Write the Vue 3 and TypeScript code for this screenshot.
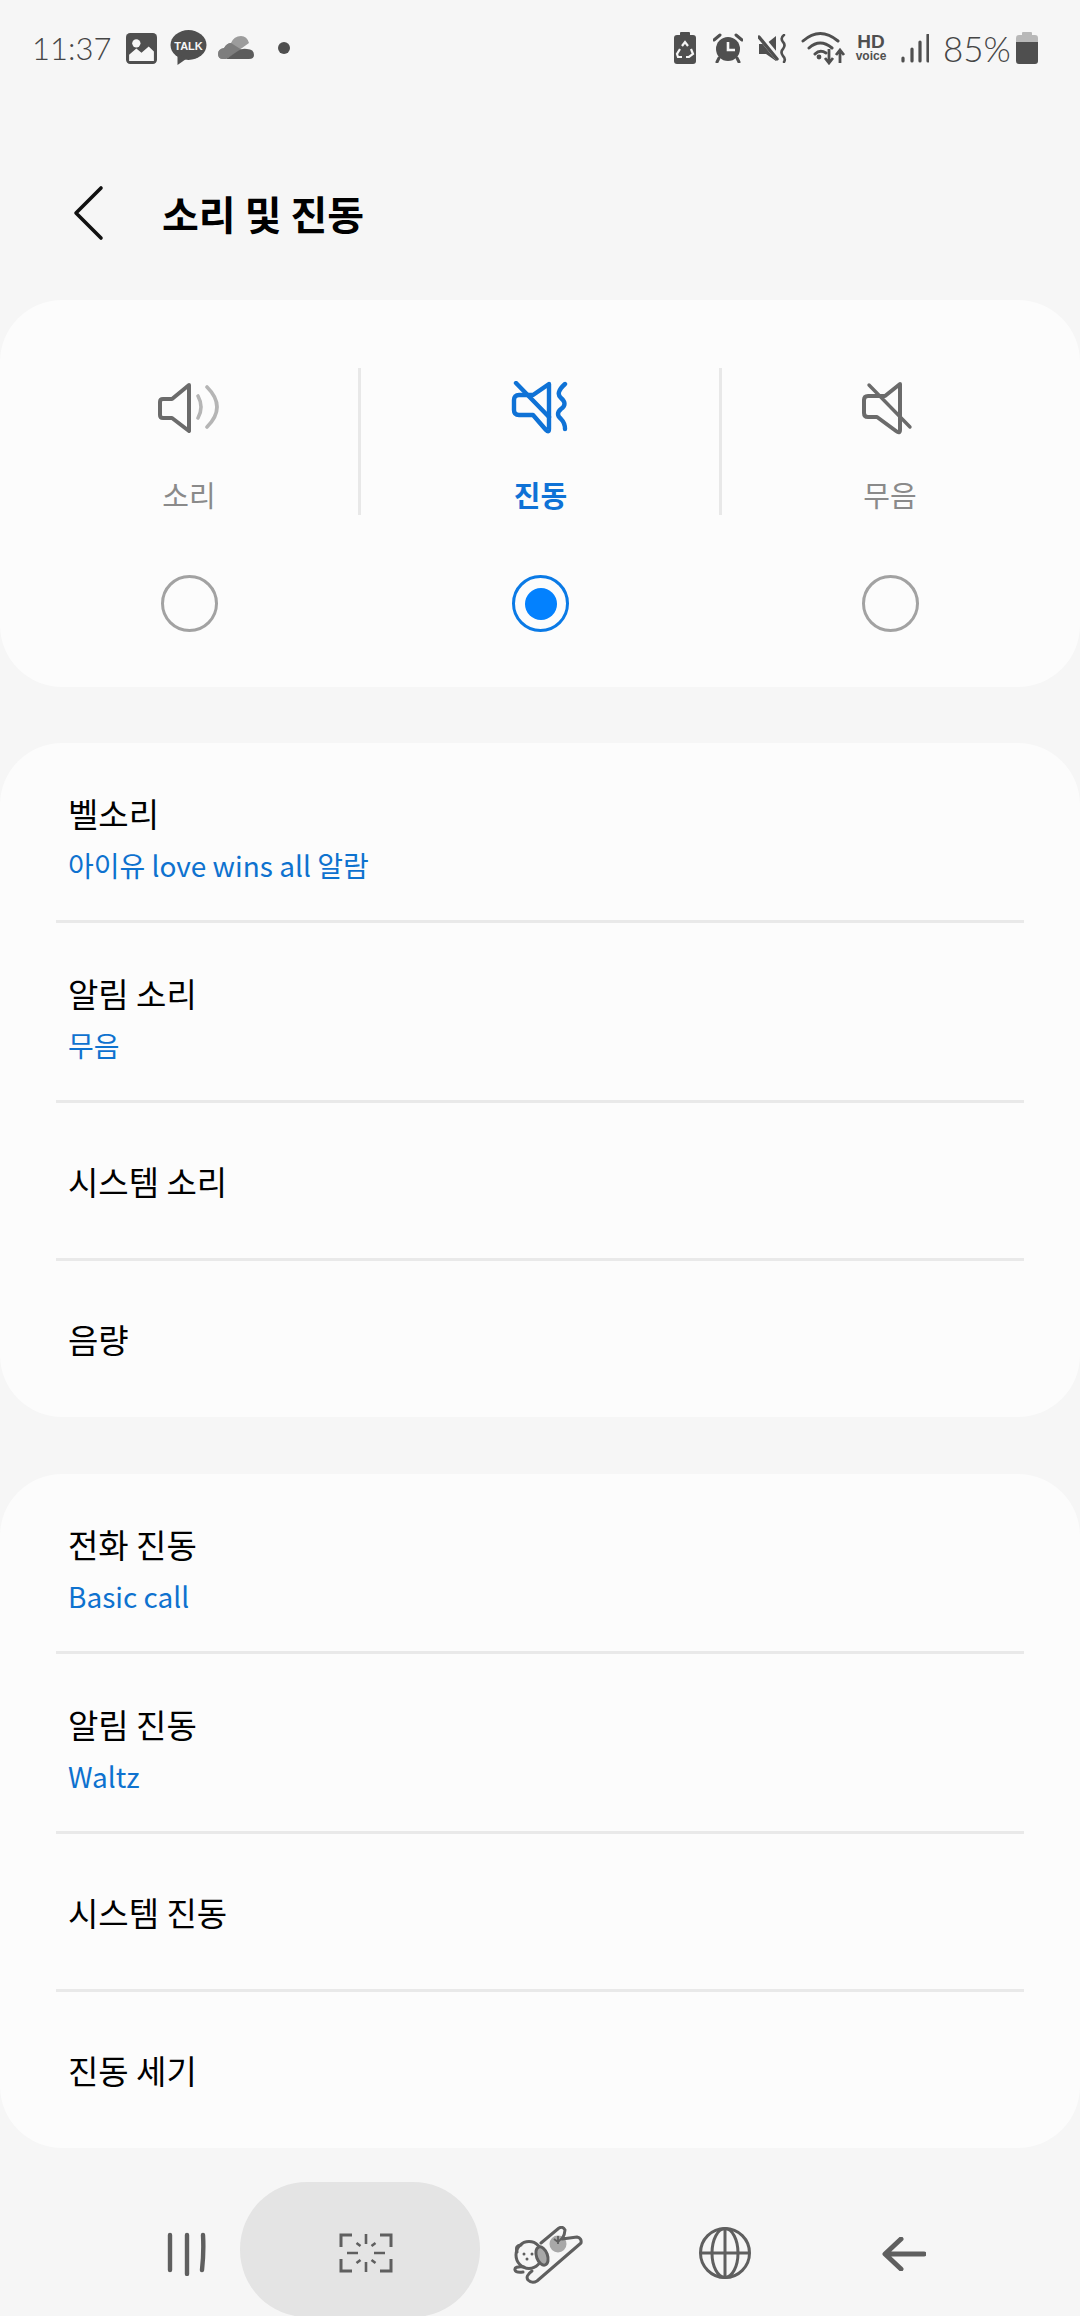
<script setup lang="ts">
interface Row {
  title: string
  sub?: string
}

const soundRows: Row[] = [
  { title: '벨소리', sub: '아이유 love wins all 알람' },
  { title: '알림 소리', sub: '무음' },
  { title: '시스템 소리' },
  { title: '음량' },
]

const vibrationRows: Row[] = [
  { title: '전화 진동', sub: 'Basic call' },
  { title: '알림 진동', sub: 'Waltz' },
  { title: '시스템 진동' },
  { title: '진동 세기' },
]

const groups = [soundRows, vibrationRows]
</script>

<template>
  <div class="page">
    <div class="status-bar">
      <div class="status-left">
        <span class="clock">11:37</span>
        <svg class="s-image" width="31" height="31" viewBox="0 0 30 30">
          <rect width="30" height="30" rx="4" fill="#4f4f4f" />
          <circle cx="10" cy="10" r="4" fill="#f6f6f6" />
          <path d="M3 27V21L10 15L15 19L22 13L27 18V27Z" fill="#f6f6f6" />
        </svg>
        <svg class="s-talk" width="37" height="36" viewBox="0 0 36 36">
          <ellipse cx="18" cy="15" rx="18" ry="15" fill="#4f4f4f" />
          <path d="M7 24L7 35L17 28Z" fill="#4f4f4f" />
          <text x="18" y="20" text-anchor="middle" class="talk-text">TALK</text>
        </svg>
        <svg class="s-cloud" width="36" height="24" viewBox="0 0 36 24">
          <path d="M5 23Q0 23 0 18Q0 13 6 12Q9 7 13 7Q16 0 23 0Q29 0 31 7L24 12L6 23Z" fill="#9c9c9c" />
          <path d="M6 12Q9 7 13 7L24 14L8 23H5Q0 23 0 18Q0 13 6 12Z" fill="#7d7d7d" />
          <path d="M8 23L20 15Q24 12 29 13Q36 13 36 19Q36 23 31 23Z" fill="#5c5c5c" />
        </svg>
        <span class="s-dot"></span>
      </div>
      <div class="status-right">
        <svg class="r-batt" width="22" height="32" viewBox="0 0 22 32">
          <rect x="6" y="0" width="10" height="4" rx="1" fill="#4f4f4f" />
          <rect y="3" width="22" height="29" rx="3" fill="#4f4f4f" />
          <path d="M8 14L11 10L14 14M17 17L19 22L15 25H12M8 25H4L3 22L6 17" stroke="#f6f6f6" stroke-width="2.2" fill="none" />
        </svg>
        <svg class="r-alarm" width="30" height="30" viewBox="0 0 30 30">
          <circle cx="15" cy="16" r="12" fill="#4f4f4f" />
          <path d="M1 7L7 2M29 7L23 2" stroke="#4f4f4f" stroke-width="3" stroke-linecap="round" />
          <path d="M6 25L4 29M24 25L26 29" stroke="#4f4f4f" stroke-width="3" stroke-linecap="round" />
          <path d="M15 9V17H22" stroke="#f6f6f6" stroke-width="2.6" fill="none" />
        </svg>
        <svg class="r-mute" width="30" height="29" viewBox="0 0 30 29">
          <path d="M18 2V27L8 20H1V10H8Z" fill="#4f4f4f" />
          <path d="M1 1L20 24" stroke="#f6f6f6" stroke-width="6" />
          <path d="M1 3L19 25" stroke="#4f4f4f" stroke-width="3.4" stroke-linecap="round" />
          <path d="M26 1Q22 4 25 8Q28 11 25 15Q22 18 25 22Q28 25 26 28" stroke="#4f4f4f" stroke-width="2.6" fill="none" stroke-linecap="round" />
        </svg>
        <svg class="r-wifi" width="46" height="34" viewBox="0 0 46 34">
          <path d="M2 10Q19 -5 37 10M8 17Q19 7 31 17M14 23Q19 18 25 22" stroke="#4f4f4f" stroke-width="3" fill="none" stroke-linecap="round" />
          <circle cx="18" cy="26" r="2.4" fill="#4f4f4f" />
          <path d="M28 18V32M24 27L28 32L32 27M39 32V19M35 24L39 19L43 24" stroke="#4f4f4f" stroke-width="2.8" fill="none" />
        </svg>
        <div class="r-hd">
          <span class="hd-top">HD</span>
          <span class="hd-bottom">voice</span>
        </div>
        <svg class="r-signal" width="28" height="29" viewBox="0 0 28 29">
          <path d="M2 24V27M11 15V27M19 8V27M27 1V27" stroke="#4f4f4f" stroke-width="3.2" stroke-linecap="round" />
        </svg>
        <span class="percent">85%</span>
        <svg class="r-level" width="22" height="32" viewBox="0 0 22 32">
          <path d="M6 1Q6 0 7 0H15Q16 0 16 1V3H19Q22 3 22 6V10H0V6Q0 3 3 3H6Z" fill="#b8b8b8" />
          <path d="M0 10H22V29Q22 32 19 32H3Q0 32 0 29Z" fill="#4f4f4f" />
        </svg>
      </div>
    </div>

    <header class="app-bar">
      <svg class="back" width="32" height="56" viewBox="0 0 32 56">
        <path d="M28 3L3 28L28 53" fill="none" stroke="#111" stroke-width="3.6" stroke-linecap="round" stroke-linejoin="round" />
      </svg>
      <h1 class="title">소리 및 진동</h1>
    </header>

    <section class="card modes">
      <div class="mode first">
        <div class="mode-tile">
          <svg width="64" height="54" viewBox="0 0 64 54">
            <path d="M32 4L15 18H6Q3 18 3 21V34Q3 37 6 37H15L32 50Z" fill="none" stroke="#6b6b6b" stroke-width="4" stroke-linejoin="round" />
            <path d="M41 15Q47 26 41 37M50 6Q70 26 50 46" fill="none" stroke="#b5b5b5" stroke-width="3.6" stroke-linecap="round" />
          </svg>
          <span class="mode-label">소리</span>
        </div>
        <span class="radio"></span>
      </div>
      <div class="mode second">
        <div class="mode-tile">
          <svg width="64" height="54" viewBox="0 0 64 54">
            <path d="M40 3L24 14H10Q5 14 5 19V29Q5 34 10 34H24L37 49Q40 52 40 48Z" fill="none" stroke="#0f72d6" stroke-width="4.4" stroke-linejoin="round" />
            <path d="M7 2L40 36" fill="none" stroke="#0f72d6" stroke-width="4.4" stroke-linecap="round" />
            <path d="M56 3Q46 12 52 17Q59 23 52 28Q46 33 52 38Q56 42 56 48" fill="none" stroke="#0f72d6" stroke-width="4.4" stroke-linecap="round" />
          </svg>
          <span class="mode-label active">진동</span>
        </div>
        <span class="radio checked"><span class="radio-dot"></span></span>
      </div>
      <div class="mode third">
        <div class="mode-tile">
          <svg width="64" height="54" viewBox="0 0 64 54">
            <path d="M42 3L27 15H10Q6 15 6 19V32Q6 36 10 36H19L38 50Q42 53 42 49Z" fill="none" stroke="#6b6b6b" stroke-width="4" stroke-linejoin="round" />
            <path d="M11 4L52 46" fill="none" stroke="#6b6b6b" stroke-width="3.4" stroke-linecap="round" />
          </svg>
          <span class="mode-label">무음</span>
        </div>
        <span class="radio"></span>
      </div>
    </section>

    <section v-for="(rows, g) in groups" :key="g" class="card list">
      <div v-for="row in rows" :key="row.title" class="row" :class="{ tall: row.sub }">
        <span class="row-title">{{ row.title }}</span>
        <span v-if="row.sub" class="row-sub">{{ row.sub }}</span>
      </div>
    </section>

    <nav class="nav-bar">
      <svg class="n-recent" width="40" height="44" viewBox="0 0 40 44">
        <path d="M3 3V38M20 3V42M36 3Q37 20 35 38" stroke="#5f5f5f" stroke-width="4.4" fill="none" stroke-linecap="round" />
      </svg>
      <div class="home-pill">
        <svg width="54" height="40" viewBox="0 0 54 40">
          <path d="M13 2H2V14M41 2H52V14M2 26V38H13M52 26V38H41" stroke="#5f5f5f" stroke-width="3" fill="none" />
          <path d="M27 1V11M27 29V39M8 20H19M35 20H46M17.5 10L21.5 13M36.5 10L32.5 13M17.5 30L21.5 27M36.5 30L32.5 27" stroke="#5f5f5f" stroke-width="2.6" fill="none" />
        </svg>
      </div>
      <svg class="n-dog" width="72" height="60" viewBox="0 0 72 60">
        <ellipse cx="45" cy="18" rx="8.5" ry="8.5" fill="#a8a8a8" />
        <path d="M28 17L46 2Q50 0 52 4Q52 8 49 13L64 11Q69 12 68 17L24 55Q19 58 15 54Q12 50 19 45" fill="none" stroke="#5f5f5f" stroke-width="3" stroke-linejoin="round" stroke-linecap="round" />
        <path d="M45 10V18M41 13L45 16L49 12" stroke="#5f5f5f" stroke-width="1.8" fill="none" />
        <ellipse cx="16" cy="29" rx="13" ry="13.5" fill="#f6f6f6" stroke="#5f5f5f" stroke-width="3" />
        <ellipse cx="29" cy="30" rx="5.5" ry="9.5" transform="rotate(-20 29 30)" fill="#a8a8a8" stroke="#5f5f5f" stroke-width="3" />
        <path d="M8 19Q2 19 4 26M11 41Q1 40 2 44Q3 47 10 46" fill="none" stroke="#5f5f5f" stroke-width="3" stroke-linecap="round" />
        <circle cx="11" cy="28" r="1.5" fill="#5f5f5f" />
        <circle cx="19" cy="28" r="1.5" fill="#5f5f5f" />
        <circle cx="14" cy="33" r="1.5" fill="#5f5f5f" />
      </svg>
      <svg class="n-globe" width="54" height="54" viewBox="0 0 54 54">
        <g fill="none" stroke="#5f5f5f" stroke-width="3">
          <circle cx="27" cy="27" r="24.5" />
          <ellipse cx="27" cy="27" rx="13" ry="24.5" />
          <path d="M27 2V52M2 27H52" />
        </g>
      </svg>
      <svg class="n-back" width="44" height="34" viewBox="0 0 44 34">
        <path d="M42 17H4M19 2L3 17L19 32" stroke="#5f5f5f" stroke-width="5" fill="none" stroke-linecap="round" stroke-linejoin="round" />
      </svg>
    </nav>
  </div>
</template>

<style>
html,
body {
  margin: 0;
  background: #f6f6f6;
}
</style>

<style scoped>
.page {
  width: 1080px;
  height: 2316px;
  overflow: hidden;
  background: #f6f6f6;
  font-family: 'Noto Sans CJK KR', 'Noto Sans', sans-serif;
  color: #000;
}
.status-bar {
  height: 96px;
  display: flex;
  justify-content: space-between;
  align-items: center;
  padding: 0 42px 0 32px;
  box-sizing: border-box;
}
.status-left,
.status-right {
  display: flex;
  align-items: center;
}
.clock {
  font-family: Lato, sans-serif;
  font-weight: 300;
  font-size: 31px;
  color: #454545;
  width: 94px;
}
.s-talk {
  margin-left: 13px;
}
.s-cloud {
  margin-left: 11px;
}
.talk-text {
  font-family: 'Liberation Sans', sans-serif;
  font-size: 11px;
  font-weight: 700;
  fill: #f6f6f6;
}
.s-dot {
  width: 12px;
  height: 12px;
  border-radius: 50%;
  background: #4f4f4f;
  margin-left: 24px;
}
.r-alarm {
  margin-left: 17px;
}
.r-mute {
  margin-left: 15px;
}
.r-wifi {
  margin-left: 13px;
}
.r-hd {
  display: flex;
  flex-direction: column;
  align-items: center;
  font-family: 'Liberation Sans', sans-serif;
  font-weight: 700;
  color: #4f4f4f;
  margin-left: 7px;
  width: 34px;
}
.hd-top {
  font-size: 19px;
  line-height: 16px;
}
.hd-bottom {
  font-size: 12px;
  line-height: 12px;
}
.r-signal {
  margin-left: 13px;
}
.percent {
  font-family: Lato, sans-serif;
  font-weight: 300;
  font-size: 35px;
  color: #454545;
  margin-left: 14px;
  width: 72px;
}
.r-level {
  margin-left: 1px;
}
.app-bar {
  height: 204px;
  box-sizing: border-box;
  padding: 30px 0 0 73px;
  display: flex;
  align-items: center;
}
.back {
  flex: none;
}
.title {
  margin: 0 0 0 57px;
  font-size: 40px;
  font-weight: 700;
  line-height: 60px;
}
.card {
  background: #fcfcfc;
  border-radius: 62px;
}
.modes {
  height: 387px;
  box-sizing: border-box;
  display: flex;
  padding-top: 68px;
  margin-bottom: 56px;
}
.mode {
  display: flex;
  flex-direction: column;
  align-items: center;
  box-sizing: border-box;
}
.first {
  width: 361px;
  padding-left: 19px;
}
.second {
  width: 361px;
}
.third {
  width: 358px;
  padding-right: 22px;
}
.mode-tile {
  height: 147px;
  width: 100%;
  box-sizing: border-box;
  display: flex;
  flex-direction: column;
  align-items: center;
  padding: 13px 0 0 1px;
  border-right: 3px solid #e8e8e8;
}
.third .mode-tile {
  padding-left: 0;
  border-right: 0;
}
.mode-label {
  font-size: 29px;
  line-height: 40px;
  margin-top: 39px;
  color: #8a8a8a;
}
.mode-label.active {
  color: #0f72d6;
  font-weight: 700;
}
.radio {
  width: 57px;
  height: 57px;
  box-sizing: border-box;
  border: 3px solid #a2a2a2;
  border-radius: 50%;
  margin: 60px 2px 0 0;
  display: flex;
  align-items: center;
  justify-content: center;
}
.third .radio {
  margin-right: 0;
}
.radio.checked {
  border-color: #0a7ae6;
}
.radio-dot {
  width: 32px;
  height: 32px;
  border-radius: 50%;
  background: #0381fe;
}
.list {
  margin-bottom: 57px;
}
.row {
  height: 158px;
  box-sizing: border-box;
  margin: 0 56px;
  padding-left: 12px;
  display: flex;
  flex-direction: column;
  justify-content: center;
  border-bottom: 3px solid #e9e9e9;
}
.row.tall {
  height: 180px;
}
.row:last-child {
  height: 156px;
  border-bottom: 0;
}
.row-title {
  font-size: 33px;
  line-height: 48px;
}
.row-sub {
  font-size: 28px;
  line-height: 38px;
  margin: 9px 0 -9px;
  color: #0e72cf;
}
.nav-bar {
  display: flex;
  align-items: flex-start;
  margin-top: -23px;
  height: 135px;
}
.n-recent {
  margin: 50px 0 0 167px;
}
.home-pill {
  width: 240px;
  height: 135px;
  margin-left: 33px;
  border-radius: 67px;
  background: #e4e4e4;
  display: flex;
  align-items: flex-start;
  justify-content: center;
  padding: 51px 0 0 12px;
  box-sizing: border-box;
}
.n-dog {
  margin: 44px 0 0 33px;
}
.n-globe {
  margin: 44px 0 0 113px;
}
.n-back {
  margin: 55px 0 0 130px;
}
</style>
